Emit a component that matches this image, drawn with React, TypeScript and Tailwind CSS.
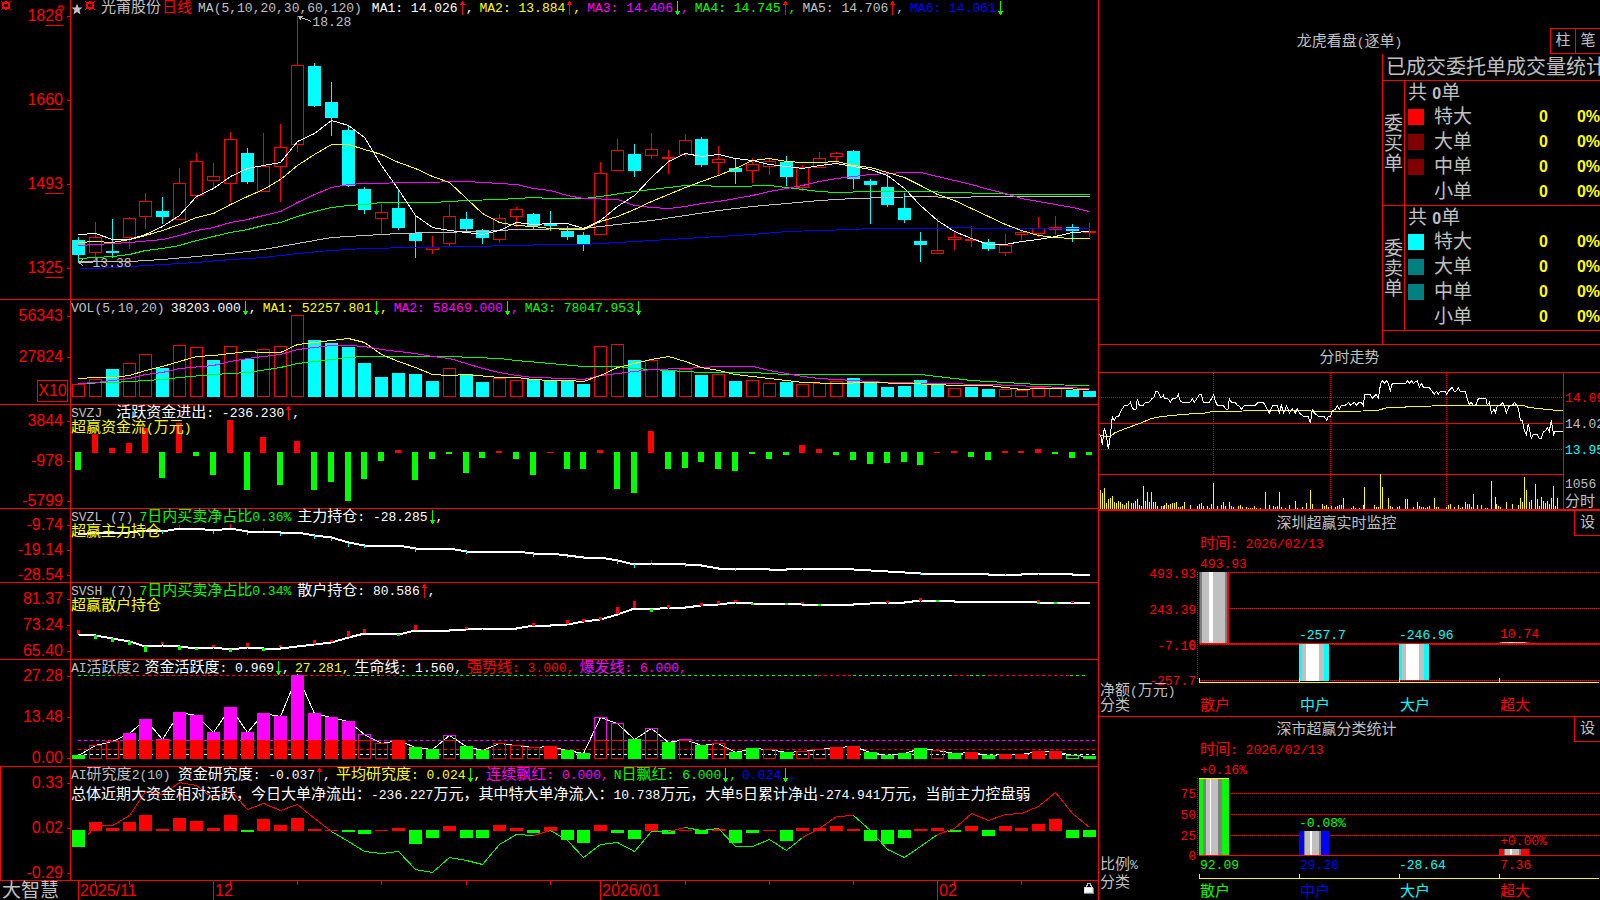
import type { ReactNode } from 'react';

type Pt = [number, number];

const CHART_LEFT = 71;
const CHART_WIDTH = 1027;

// Left edge of the centre pixel of bar i
const cx = (i: number) => Math.floor(78.6 + 16.845 * i);

// [high, body top, body bottom, low, rising]
const CANDLES: [number, number, number, number, number][] = [
  [237, 240, 255, 262, 0], [222, 237, 253, 259, 1], [219, 251, 253, 258, 0], [217, 218, 238, 249, 1],
  [193, 201, 217, 229, 1], [197, 211, 217, 224, 0], [168, 183, 220, 220, 1], [153, 161, 196, 199, 1],
  [163, 176, 181, 188, 1], [132, 139, 184, 202, 1], [148, 153, 182, 184, 0], [133, 166, 192, 192, 1],
  [124, 147, 167, 202, 1], [16, 65, 145, 152, 1], [63, 66, 106, 107, 0], [82, 102, 118, 136, 0],
  [126, 130, 186, 187, 0], [187, 189, 210, 214, 0], [204, 212, 219, 233, 1], [189, 208, 228, 230, 0],
  [215, 233, 241, 258, 0], [236, 247, 250, 254, 1], [204, 216, 244, 246, 1], [212, 219, 229, 231, 0],
  [229, 230, 238, 244, 0], [214, 218, 240, 243, 1], [207, 209, 217, 227, 1], [213, 214, 226, 229, 0],
  [211, 224, 226, 231, 0], [226, 231, 237, 240, 0], [232, 235, 244, 251, 0], [162, 173, 235, 235, 1],
  [139, 150, 171, 171, 1], [144, 154, 171, 177, 0], [133, 149, 156, 159, 1], [150, 157, 158, 174, 1],
  [134, 140, 155, 157, 1], [137, 139, 165, 167, 0], [146, 159, 163, 176, 1], [159, 168, 172, 184, 0],
  [158, 164, 171, 183, 1], [159, 161, 167, 175, 1], [156, 162, 177, 186, 0], [165, 167, 188, 191, 1],
  [152, 158, 168, 168, 1], [152, 153, 157, 163, 1], [150, 151, 179, 189, 0], [179, 181, 185, 224, 0],
  [174, 187, 205, 207, 0], [193, 208, 220, 223, 0], [232, 241, 245, 262, 0], [218, 250, 254, 254, 1],
  [232, 237, 240, 250, 1], [226, 239, 241, 247, 1], [239, 242, 249, 251, 0], [234, 245, 253, 256, 1],
  [230, 232, 235, 240, 1], [217, 228, 234, 237, 1], [216, 227, 230, 235, 1], [224, 227, 231, 242, 0],
  [223, 231, 233, 237, 1],
];

const MA5: Pt[] = [[0, 234], [1, 233], [2, 239], [3, 239], [4, 234], [5, 226], [6, 215], [7, 196], [8, 188], [9, 176], [10, 168], [11, 165], [12, 162], [13, 141], [14, 133], [15, 120], [16, 125], [17, 137], [18, 165], [19, 189], [20, 215], [21, 227], [22, 230], [23, 232], [24, 234], [25, 230], [26, 222], [27, 224], [28, 223], [29, 223], [30, 228], [31, 220], [32, 206], [33, 195], [34, 177], [35, 161], [36, 153], [37, 156], [38, 154], [39, 158], [40, 160], [41, 164], [42, 166], [43, 168], [44, 165], [45, 163], [46, 166], [47, 169], [48, 175], [49, 188], [50, 205], [51, 220], [52, 231], [53, 238], [54, 244], [55, 244], [56, 241], [57, 239], [58, 236], [59, 232], [60, 231]];
const MA10: Pt[] = [[0, 242], [1, 241], [2, 242], [3, 239], [4, 235], [5, 230], [6, 224], [7, 217], [8, 213], [9, 204], [10, 196], [11, 189], [12, 179], [13, 165], [14, 154], [15, 144], [16, 144], [17, 149], [18, 154], [19, 162], [20, 168], [21, 176], [22, 182], [23, 198], [24, 213], [25, 222], [26, 225], [27, 226], [28, 228], [29, 229], [30, 229], [31, 221], [32, 216], [33, 209], [34, 201], [35, 194], [36, 187], [37, 181], [38, 175], [39, 168], [40, 160], [41, 158], [42, 161], [43, 162], [44, 162], [45, 161], [46, 165], [47, 167], [48, 172], [49, 177], [50, 185], [51, 194], [52, 200], [53, 208], [54, 216], [55, 224], [56, 230], [57, 235], [58, 237], [59, 238], [60, 238]];
const MA20: Pt[] = [[0, 245], [1, 244], [3, 242], [5, 239], [6, 235], [7, 230], [8, 227], [9, 222], [10, 219], [11, 215], [12, 211], [13, 202], [14, 194], [15, 187], [16, 184], [17, 183], [20, 182], [23, 181], [26, 184], [27, 188], [28, 190], [29, 195], [30, 198], [32, 199], [33, 205], [34, 207], [35, 208], [36, 206], [37, 203], [38, 201], [39, 198], [40, 195], [41, 191], [42, 188], [43, 185], [44, 181], [45, 178], [46, 176], [47, 174], [48, 173], [49, 172], [50, 172], [51, 176], [52, 180], [53, 184], [54, 189], [55, 193], [56, 198], [57, 201], [58, 204], [59, 207], [60, 211]];
const MA30: Pt[] = [[0, 258], [2, 256], [3, 254], [4, 250], [5, 248], [6, 245], [7, 240], [8, 236], [9, 232], [10, 229], [11, 225], [12, 222], [13, 216], [14, 211], [15, 207], [16, 205], [17, 204], [18, 202], [21, 202], [23, 200], [25, 199], [27, 197], [28, 198], [30, 198], [31, 196], [33, 191], [34, 189], [36, 185], [39, 186], [41, 185], [42, 187], [43, 189], [44, 191], [45, 192], [47, 191], [50, 191], [52, 192], [54, 193], [56, 194], [60, 194]];
const MA60: Pt[] = [[0, 261], [3, 261], [5, 259], [7, 256], [9, 253], [11, 249], [13, 243], [15, 237], [17, 235], [19, 233], [21, 232], [24, 231], [26, 229], [30, 228], [32, 224], [34, 220], [36, 215], [38, 210], [40, 206], [42, 203], [44, 200], [46, 198], [48, 197], [50, 196], [52, 197], [54, 196], [60, 196]];
const MA120: Pt[] = [[0, 268], [1, 268], [3, 266], [5, 264], [7, 262], [9, 259], [11, 257], [13, 253], [15, 250], [17, 248], [20, 247], [23, 246], [26, 245], [28, 244], [30, 244], [32, 242], [34, 240], [36, 238], [38, 236], [40, 234], [42, 231], [44, 230], [46, 229], [47, 228], [51, 228], [52, 227], [54, 228], [60, 228]];

const VOLUMES = [
  384, 379, 369, 363, 354, 368, 345, 347, 360, 346, 359, 349, 346, 315, 340, 343, 347, 363, 377, 373, 374, 381, 368, 374, 382, 378, 380, 379, 381, 381,
  384, 346, 344, 360, 360, 370, 369, 375, 374, 381, 380, 383, 382, 384, 383, 381, 378, 382, 387, 386, 380, 384, 388, 387, 389, 389, 390, 387, 388, 390, 391,
];
const VOLUME_UP = new Set([0, 1, 3, 4, 6, 7, 9, 11, 12, 13, 22, 25, 26, 31, 32, 34, 36, 38, 40, 41, 43, 44, 45, 52, 55, 56, 57, 58]);
const VOL5: Pt[] = [[0, 378], [1, 377], [2, 377], [3, 375], [4, 370], [5, 366], [6, 361], [7, 356], [8, 355], [9, 353], [10, 351], [11, 352], [12, 352], [13, 344], [14, 342], [15, 340], [16, 338], [17, 342], [18, 354], [19, 361], [20, 367], [21, 374], [22, 375], [23, 374], [25, 377], [26, 377], [27, 379], [28, 380], [29, 380], [30, 381], [31, 375], [32, 367], [33, 363], [34, 359], [35, 356], [36, 361], [37, 367], [38, 370], [39, 374], [40, 376], [41, 378], [42, 380], [43, 382], [45, 383], [47, 382], [49, 383], [51, 384], [52, 385], [54, 385], [55, 387], [56, 389], [57, 388], [58, 388], [60, 389]];
const VOL10: Pt[] = [[0, 383], [1, 382], [2, 380], [3, 378], [4, 374], [5, 372], [6, 368], [8, 365], [9, 361], [10, 358], [11, 356], [12, 354], [13, 349], [14, 347], [15, 345], [16, 345], [17, 346], [18, 349], [20, 353], [21, 356], [22, 358], [23, 363], [24, 368], [25, 372], [26, 375], [27, 377], [29, 378], [30, 379], [31, 375], [33, 371], [34, 369], [36, 368], [37, 367], [38, 366], [40, 366], [41, 370], [42, 373], [43, 376], [44, 378], [46, 380], [48, 382], [51, 383], [54, 384], [57, 386], [60, 388]];
const VOL20: Pt[] = [[0, 383], [2, 382], [3, 381], [5, 379], [6, 377], [8, 374], [10, 372], [12, 367], [13, 363], [14, 361], [16, 357], [17, 356], [22, 356], [25, 358], [26, 360], [28, 363], [30, 366], [32, 366], [33, 368], [34, 369], [36, 371], [37, 372], [40, 372], [42, 374], [50, 374], [52, 378], [53, 380], [55, 382], [57, 384], [60, 385]];

const FUND_FLOW = [
  -18, 19, 5, 10, 25, -26, 30, -4, -23, 33, -38, 16, -33, 12, -38, -30, -49, -27, -9, 3, -28, -7, -2, -21, -6, 2, -7, -23, 1, -17,
  -17, 3, -37, -41, 22, -17, -16, -10, -17, -19, -2, -7, -3, 8, 4, -3, -8, -12, -11, -10, -13, 1, 2, -5, -8, 2, 2, 4, -2, -6, -3,
];

const MAIN_HOLD: Pt[] = [[0, 534], [1, 532], [3, 532], [4, 530], [5, 531], [6, 528], [7, 528], [8, 530], [9, 528], [10, 531], [11, 531], [12, 532], [13, 532], [14, 535], [15, 537], [16, 542], [17, 545], [19, 545], [20, 548], [22, 548], [23, 551], [26, 551], [27, 553], [28, 553], [29, 555], [30, 557], [31, 557], [32, 560], [33, 564], [34, 563], [35, 563], [36, 564], [37, 565], [38, 568], [40, 568], [41, 569], [42, 569], [43, 568], [45, 568], [46, 569], [47, 570], [48, 571], [49, 572], [50, 573], [53, 573], [54, 574], [56, 574], [57, 573], [58, 573], [59, 574], [60, 574]];
// [bar, y, height, colour]
const MAIN_MARKS: [number, number, number, string][] = [
  [4, 526, 4, '#f00'], [6, 525, 3, '#f00'], [9, 524, 4, '#f00'], [11, 528, 3, '#f00'], [34, 560, 3, '#f00'], [55, 573, 2, '#f00'],
  [5, 531, 3, '#0ff'], [8, 531, 3, '#0ff'], [10, 532, 3, '#0ff'], [12, 533, 3, '#0ff'], [14, 535, 4, '#0ff'], [15, 537, 4, '#0ff'],
  [16, 543, 4, '#0ff'], [17, 545, 3, '#0ff'], [20, 548, 4, '#0ff'], [23, 551, 3, '#0ff'], [27, 553, 4, '#0ff'], [29, 556, 2, '#0ff'],
  [30, 557, 2, '#0ff'], [32, 560, 4, '#0ff'], [33, 564, 4, '#0ff'], [36, 564, 3, '#0ff'], [39, 568, 3, '#0ff'], [50, 573, 2, '#0ff'],
];

const RETAIL_HOLD: Pt[] = [[0, 634], [1, 635], [2, 638], [3, 641], [4, 646], [5, 645], [6, 646], [7, 648], [8, 647], [9, 649], [10, 647], [11, 648], [12, 648], [13, 646], [14, 644], [15, 642], [16, 637], [17, 633], [18, 633], [19, 634], [20, 630], [22, 630], [23, 629], [24, 628], [26, 628], [27, 625], [28, 625], [29, 624], [30, 621], [31, 619], [32, 614], [33, 608], [34, 609], [35, 607], [36, 607], [37, 605], [38, 604], [39, 602], [40, 603], [42, 603], [43, 604], [46, 604], [47, 603], [48, 602], [49, 602], [50, 600], [51, 600], [52, 601], [56, 601], [57, 602], [60, 602]];
const RETAIL_MARKS: [number, number, number, string][] = [
  [0, 630, 4, '#f00'], [5, 642, 2, '#f00'], [8, 645, 2, '#f00'], [10, 643, 4, '#f00'], [12, 645, 2, '#f00'], [14, 640, 4, '#f00'],
  [15, 640, 2, '#f00'], [16, 631, 6, '#f00'], [17, 629, 4, '#f00'], [20, 625, 5, '#f00'], [23, 627, 2, '#f00'], [27, 623, 3, '#f00'],
  [29, 620, 4, '#f00'], [30, 619, 3, '#f00'], [31, 617, 3, '#f00'], [32, 607, 7, '#f00'], [33, 601, 7, '#f00'], [35, 605, 3, '#f00'],
  [37, 603, 3, '#f00'], [38, 601, 3, '#f00'], [39, 600, 2, '#f00'], [43, 602, 2, '#f00'], [48, 601, 2, '#f00'], [50, 598, 3, '#f00'],
  [57, 600, 2, '#f00'], [59, 601, 2, '#f00'], [1, 635, 4, '#0f0'], [2, 638, 4, '#0f0'], [3, 641, 4, '#0f0'], [4, 646, 6, '#0f0'],
  [6, 646, 4, '#0f0'], [7, 648, 2, '#0f0'], [9, 649, 3, '#0f0'], [11, 648, 3, '#0f0'], [19, 634, 2, '#0f0'], [34, 609, 3, '#0f0'],
  [40, 603, 2, '#0f0'], [42, 603, 2, '#0f0'], [44, 604, 2, '#0f0'], [51, 600, 2, '#0f0'], [57, 602, 2, '#0f0'], [58, 602, 2, '#0f0'],
];

// kinds: g green, G green outline, r red, h red outline, m magenta over red, o magenta outline
const ACTIVITY = [
  755, 745, 741, 733, 719, 739, 712, 715, 732, 707, 732, 713, 716, 675, 713, 717, 721, 734, 743, 740, 747, 749, 735, 746, 750, 743, 745, 747, 746, 750,
  753, 717, 723, 739, 728, 742, 739, 745, 743, 752, 748, 749, 752, 751, 749, 747, 746, 752, 755, 753, 748, 750, 753, 752, 755, 754, 754, 751, 751, 755, 756,
];
const ACTIVITY_KIND = 'ghhmmmmmmmmmmmmmmohrggogghhhrggoogogoghgghghhrrgggghgrgrrrrGg';

// Colour runs of the dashed ceiling line, in pixels
const CEILING: [number, number, string][] = [
  [78, 112, '#0f0'], [112, 347, '#f00'], [347, 381, '#0f0'], [381, 400, '#f00'], [400, 533, '#0f0'], [533, 550, '#f00'], [550, 818, '#0f0'],
  [818, 853, '#f00'], [853, 954, '#0f0'], [954, 970, '#f00'], [970, 988, '#0f0'], [988, 1070, '#f00'], [1070, 1088, '#0f0'],
];

const RESEARCH = [
  -17, 9, 3, 9, 16, 2, 13, 10, 3, 16, -2, 12, 6, 13, 2, 1, -2, -4, 1, 3, -14, -8, 5, -8, -8, 6, 3, -3, 4, -10,
  -13, 6, -3, -9, 7, -4, 1, -4, 2, -13, -3, 1, -11, 3, 3, 5, 2, -11, -14, -8, 2, 3, -2, 5, -6, 5, 3, 7, 12, -8, -7,
];
const RESEARCH_LINES: { color: string; pts: Pt[] }[] = [
  { color: '#f00', pts: [[0.5, 835], [1, 825], [2, 825], [3, 815], [4, 791], [5, 794], [6, 782], [7, 785], [8, 798], [9, 790], [10, 809], [11, 803], [12, 810], [13, 804], [14, 818], [15, 831]] },
  { color: '#0f0', pts: [[15, 831], [16, 841], [17, 851], [18, 853], [19, 851], [20, 869], [21, 872], [22, 857], [23, 860], [24, 864], [25, 844], [26, 834], [27, 835]] },
  { color: '#f00', pts: [[27, 835], [28, 830]] },
  { color: '#0f0', pts: [[28, 830], [29, 840], [30, 857], [31, 844], [32, 842], [33, 851], [34, 831], [35, 831]] },
  { color: '#f00', pts: [[35, 831], [36, 827]] },
  { color: '#0f0', pts: [[36, 827], [37, 830], [38, 828], [39, 846], [40, 846], [41, 839], [42, 850], [43, 837]] },
  { color: '#f00', pts: [[43, 837], [44, 828], [45, 816], [46, 815]] },
  { color: '#0f0', pts: [[46, 815], [47, 830], [48, 849], [49, 857], [50, 846], [51, 834]] },
  { color: '#f00', pts: [[51, 834], [52, 828], [53, 813], [54, 820], [55, 814], [56, 813], [57, 806], [58, 792], [59, 813], [60, 827]] },
];

// Intraday data is drawn at three units per pixel
const INTRADAY_PRICE = '27,284 32,286 37,315 43,263 49,286 55,328 60,293 67,230 73,240 79,230 86,229 91,218 96,208 103,197 115,195 121,187 127,203 133,209 138,207 142,176 148,197 160,196 166,187 178,186 186,176 192,172 198,154 204,156 213,175 220,166 223,175 235,177 241,186 247,177 259,174 265,164 271,184 277,187 300,187 307,176 313,187 328,164 334,164 340,187 358,187 365,175 371,164 377,186 383,197 400,197 409,208 414,207 418,176 424,186 436,187 442,197 448,198 454,209 460,200 466,196 496,196 505,187 520,187 526,197 532,208 538,219 548,197 562,196 568,219 574,196 581,219 590,197 598,219 607,207 616,219 622,207 628,219 640,228 655,230 661,250 667,208 673,219 685,229 703,230 710,241 715,230 721,230 727,212 737,207 742,197 748,207 754,196 766,196 776,187 782,196 793,187 799,196 808,187 814,187 820,196 824,163 841,163 847,175 858,163 865,174 872,130 878,122 884,130 889,122 895,130 901,153 907,130 948,130 952,122 958,130 964,122 970,130 982,122 988,141 994,130 1000,141 1018,143 1033,163 1039,154 1045,163 1051,154 1066,154 1070,163 1075,154 1086,142 1093,154 1098,154 1105,143 1111,154 1126,154 1131,175 1138,193 1143,187 1150,196 1157,196 1165,176 1188,176 1192,196 1198,187 1204,219 1212,208 1216,219 1222,197 1231,197 1237,188 1243,196 1249,219 1258,197 1267,196 1274,187 1285,205 1291,240 1297,242 1303,273 1309,284 1315,251 1324,295 1330,284 1342,284 1347,295 1354,295 1360,275 1366,273 1372,262 1378,274 1384,241 1391,284 1395,274 1419,274';
const INTRADAY_AVG = '27,284 40,288 62,289 75,278 100,268 150,250 185,235 220,229 280,223 345,219 370,214 460,213 470,211 655,211 665,214 820,213 835,211 865,211 890,203 945,202 950,199 1025,198 1035,196 1300,196 1315,202 1360,207 1385,209 1395,211 1419,211';
const INTRADAY_VOL: Pt[] = [[31, 450], [37, 459], [43, 444], [49, 489], [55, 477], [61, 474], [67, 468], [73, 486], [79, 489], [85, 483], [91, 486], [97, 492], [103, 495], [109, 489], [115, 483], [124, 489], [130, 489], [136, 483], [142, 477], [148, 495], [154, 498], [160, 438], [166, 483], [172, 456], [178, 486], [184, 456], [190, 486], [196, 486], [202, 498], [214, 498], [220, 498], [223, 495], [229, 489], [235, 495], [241, 492], [247, 489], [253, 489], [259, 486], [265, 501], [271, 501], [277, 498], [283, 486], [301, 495], [322, 498], [328, 492], [334, 489], [340, 498], [352, 498], [358, 504], [364, 492], [370, 430], [382, 498], [394, 495], [400, 486], [406, 498], [418, 486], [424, 498], [430, 501], [445, 498], [451, 495], [457, 501], [469, 501], [475, 504], [481, 504], [487, 504], [493, 498], [499, 504], [511, 504], [526, 456], [538, 495], [550, 498], [556, 501], [562, 498], [568, 456], [574, 501], [586, 504], [598, 495], [616, 483], [622, 504], [637, 501], [649, 489], [661, 450], [667, 492], [697, 492], [703, 498], [709, 495], [715, 501], [724, 498], [736, 501], [742, 498], [748, 495], [754, 495], [760, 474], [784, 504], [790, 498], [796, 504], [808, 504], [820, 495], [823, 441], [853, 495], [859, 501], [865, 501], [871, 403], [877, 441], [895, 474], [901, 498], [907, 501], [922, 501], [928, 498], [946, 477], [952, 477], [970, 501], [982, 486], [988, 498], [994, 501], [1000, 501], [1006, 504], [1012, 501], [1018, 498], [1033, 474], [1039, 501], [1045, 501], [1069, 501], [1075, 495], [1081, 492], [1093, 501], [1105, 495], [1111, 504], [1117, 501], [1126, 486], [1132, 492], [1138, 492], [1144, 501], [1150, 462], [1162, 495], [1174, 495], [1186, 504], [1192, 504], [1204, 423], [1216, 471], [1219, 492], [1225, 498], [1231, 501], [1249, 486], [1267, 492], [1285, 495], [1291, 474], [1297, 486], [1303, 411], [1309, 450], [1318, 486], [1324, 480], [1336, 432], [1342, 477], [1348, 498], [1354, 471], [1360, 483], [1366, 489], [1372, 483], [1378, 492], [1384, 474], [1390, 438], [1396, 498], [1402, 474]];

const MONO = 'font-["Liberation_Mono","Noto_Sans_CJK_SC",monospace]';
const SANS = 'font-["Liberation_Sans","Noto_Sans_CJK_SC",sans-serif]';

// Chinese runs are set a little larger than the Latin ones
function Mixed({ text }: { text: string }) {
  return (
    <>
      {text.split(/([\u3000-\u9fff\uff00-\uffef]+)/).map((part, i) =>
        i % 2 ? <span key={i} className="text-[15px]">{part}</span> : part
      )}
    </>
  );
}

function Arrow({ dir }: { dir: 'up' | 'down' }) {
  const up = dir === 'up';
  return (
    <svg width="8" height="15" viewBox="0 0 8 15" className="shrink-0" shapeRendering="crispEdges" fill={up ? '#f00' : '#0f0'}>
      <rect x="4" y="0" width="1" height="14" />
      {up ? <path d="M3 1h3v2h1v1H2V3h1z" /> : <path d="M3 13h3v-2h1v-1H2v1h1z" />}
    </svg>
  );
}

function Item({ color, text, dir, comma = true }: { color: string; text: string; dir?: 'up' | 'down'; comma?: boolean }) {
  return (
    <span className={`flex ${color}`}>
      <span><Mixed text={text} /></span>
      {dir && <Arrow dir={dir} />}
      {comma && <span>,</span>}
    </span>
  );
}

function Gear() {
  return (
    <svg width="10" height="10" viewBox="0 0 10 10" shapeRendering="crispEdges" fill="#f00">
      <path fillRule="evenodd" d="M1 1h8v7H1zM3 3v3h4V3z" />
      <path d="M0 0h1v1H0zM9 0h1v1H9zM0 8h1v1H0zM9 8h1v1H9zM4 0h2v1H4zM4 8h2v1H4z" />
    </svg>
  );
}

function Line({ pts, color, width = 1 }: { pts: Pt[]; color: string; width?: number }) {
  return (
    <polyline
      points={pts.map(([i, y]) => `${cx(i) + 0.5},${y + 0.5}`).join(' ')}
      fill="none"
      stroke={color}
      strokeWidth={width}
      vectorEffect="non-scaling-stroke"
    />
  );
}

function HollowBar({ i, top, bottom, color }: { i: number; top: number; bottom: number; color: string }) {
  return <rect x={cx(i) - 5.5} y={top + 0.5} width={12} height={Math.max(bottom - top - 1, 0.5)} fill="none" stroke={color} />;
}

interface PanelProps {
  top: number;
  height: string;
  chartHeight: number;
  gap: string;
  labels: ReactNode[];
  axisExtra?: ReactNode;
  axisClass?: string;
  header: ReactNode;
  headerGap?: string;
  note?: string;
  noteClass?: string;
  chart: ReactNode;
  children?: ReactNode;
}

function Panel({ top, height, chartHeight, gap, labels, axisExtra, axisClass = '', header, headerGap = 'gap-1.5', note, noteClass = 'text-[#ff0]', chart, children }: PanelProps) {
  return (
    <section className={`flex border-b border-[#f00] ${height}`}>
      <div className={`relative flex w-[71px] shrink-0 flex-col border-r border-[#f00] pt-2 ${gap} ${SANS} text-base leading-4 text-[#f00] ${axisClass}`}>
        {labels.map((label, i) => (
          <div key={i} className="flex items-center justify-end gap-1">
            <span>{label}</span>
            <span className="h-px w-[3px] bg-[#f00]" />
          </div>
        ))}
        {axisExtra}
      </div>
      <div className="relative min-w-0 flex-1">
        <svg
          className="block h-full w-full"
          viewBox={`${CHART_LEFT} ${top} ${CHART_WIDTH} ${chartHeight}`}
          preserveAspectRatio="none"
          shapeRendering="crispEdges"
        >
          {chart}
        </svg>
        <div className="absolute left-0 top-0 pt-px leading-[15px] whitespace-pre">
          <div className={`flex ${headerGap}`}>{header}</div>
          {note && <div className={noteClass}><Mixed text={note} /></div>}
        </div>
        {children}
      </div>
    </section>
  );
}

function PriceLabel({ value }: { value: string }) {
  return (
    <>
      {value.slice(0, 2)}
      <span className="underline decoration-1 underline-offset-[4px]">{value.slice(2)}</span>
    </>
  );
}

function Candles() {
  return (
    <>
      {CANDLES.map(([high, top, bottom, low, up], i) =>
        up ? (
          <g key={i}>
            <rect x={cx(i)} y={high} width={1} height={top - high} fill="#f00" />
            <rect x={cx(i)} y={bottom} width={1} height={low - bottom} fill="#f00" />
            <HollowBar i={i} top={top} bottom={bottom} color="#f00" />
          </g>
        ) : (
          <g key={i} fill="#0ff">
            <rect x={cx(i)} y={high} width={1} height={low - high} />
            <rect x={cx(i) - 6} y={top} width={13} height={bottom - top} />
          </g>
        )
      )}
    </>
  );
}

function ActivityBars() {
  const base = 759;
  const split = 740;
  return (
    <>
      {ACTIVITY.map((y, i) => {
        const kind = ACTIVITY_KIND[i];
        const x = cx(i) - 6;
        if (kind === 'g' || kind === 'r') {
          return <rect key={i} x={x} y={y} width={13} height={base - y} fill={kind === 'g' ? '#0f0' : '#f00'} />;
        }
        if (kind === 'h' || kind === 'G') {
          return <HollowBar key={i} i={i} top={y} bottom={base} color={kind === 'h' ? '#f00' : '#0f0'} />;
        }
        if (kind === 'm') {
          return (
            <g key={i}>
              <rect x={x} y={y} width={13} height={split - y} fill="#f0f" />
              <rect x={x} y={split} width={13} height={base - split} fill="#f00" />
            </g>
          );
        }
        return (
          <g key={i}>
            <HollowBar i={i} top={y} bottom={split + 1} color="#f0f" />
            <HollowBar i={i} top={split} bottom={base} color="#f00" />
          </g>
        );
      })}
    </>
  );
}

function LeftCharts() {
  return (
    <div className="min-w-0 flex-1">
      <Panel
        top={0}
        height="h-[300px]"
        chartHeight={299}
        gap="gap-[68px]"
        labels={['1828', '1660', '1493', '1325'].map(v => <PriceLabel key={v} value={v} />)}
        axisExtra={
          <>
            <button aria-label="设置" className="absolute left-px top-px"><Gear /></button>
            <button aria-label="帮助" className="absolute right-[5px] top-0 text-sm font-bold text-[#c00000]">?</button>
          </>
        }
        header={
          <>
            <span className="flex items-center gap-0.5 text-[#c0c0c0]">
              <svg width="12" height="12" viewBox="0 0 24 24" fill="#c0c0c0">
                <path d="M12 1l3 8h8l-6 5 2 9-7-5-7 5 2-9-6-5h8z" />
              </svg>
              <button aria-label="指标设置" className="self-start"><Gear /></button>
            </span>
            <span className="flex gap-px text-[15px]">
              <span className="text-[#c0c0c0]">光莆股份</span>
              <span className="text-[#f00]">日线</span>
            </span>
            <span className="mr-1 text-[#c0c0c0]">MA(5,10,20,30,60,120)</span>
            <Item color="text-white" text="MA1: 14.026" dir="up" />
            <Item color="text-[#ff0]" text="MA2: 13.884" dir="up" />
            <Item color="text-[#f0f]" text="MA3: 14.406" dir="down" />
            <Item color="text-[#0f0]" text="MA4: 14.745" dir="up" />
            <Item color="text-[#c0c0c0]" text="MA5: 14.706" dir="up" />
            <Item color="text-[#00f]" text="MA6: 14.061" dir="down" comma={false} />
          </>
        }
        chart={
          <>
            <Candles />
            <Line pts={MA120} color="#00f" />
            <Line pts={MA60} color="#c0c0c0" />
            <Line pts={MA30} color="#0f0" />
            <Line pts={MA20} color="#f0f" />
            <Line pts={MA10} color="#ff0" />
            <Line pts={MA5} color="#fff" />
            <path d="M311.5 21.5L298.5 16.5l3 4M298.5 16.5h4M92.5 262.5H79l4-3M79 262.5l4 3" fill="none" stroke="#c0c0c0" />
          </>
        }
      >
        <span className="absolute left-[23.5%] top-[15px] leading-[15px] text-[#c0c0c0]">18.28</span>
        <span className="absolute left-[2.1%] top-[256px] leading-[15px] text-[#c0c0c0]">13.38</span>
      </Panel>

      <Panel
        top={300}
        height="h-[105px]"
        chartHeight={104}
        gap="gap-[25px]"
        labels={['56343', '27824']}
        axisExtra={<div className="-mt-2.5 mr-0.5 h-[22px] w-[31px] self-end border border-[#f00] text-center leading-5">X10</div>}
        header={
          <>
            <span className="text-[#c0c0c0]">VOL(5,10,20)</span>
            <Item color="text-white" text="38203.000" dir="down" />
            <Item color="text-[#ff0]" text="MA1: 52257.801" dir="down" />
            <Item color="text-[#f0f]" text="MA2: 58469.000" dir="down" />
            <Item color="text-[#0f0]" text="MA3: 78047.953" dir="down" comma={false} />
          </>
        }
        chart={
          <>
            {VOLUMES.map((y, i) =>
              VOLUME_UP.has(i)
                ? <HollowBar key={i} i={i} top={y} bottom={397} color="#f00" />
                : <rect key={i} x={cx(i) - 6} y={y} width={13} height={397 - y} fill="#0ff" />
            )}
            <Line pts={VOL20} color="#0f0" />
            <Line pts={VOL10} color="#f0f" />
            <Line pts={VOL5} color="#ff0" />
          </>
        }
      />

      <Panel
        top={405}
        height="h-[104px]"
        chartHeight={103}
        gap="gap-6"
        labels={['3844', '-978', '-5799']}
        header={
          <>
            <span className="mr-2 text-[#c0c0c0]">SVZJ</span>
            <Item color="text-white" text="活跃资金进出: -236.230" dir="up" />
          </>
        }
        note="超赢资金流(万元)"
        chart={FUND_FLOW.map((v, i) => (
          <rect key={i} x={cx(i) - 3} y={v > 0 ? 453 - v : 452} width={6} height={Math.abs(v)} fill={v > 0 ? '#f00' : '#0f0'} />
        ))}
      />

      <Panel
        top={509}
        height="h-[74px]"
        chartHeight={73}
        gap="gap-[9px]"
        labels={['-9.74', '-19.14', '-28.54']}
        header={
          <>
            <span className="text-[#c0c0c0]">SVZL (7)</span>
            <Item color="text-[#0f0]" text="7日内买卖净占比0.36%" comma={false} />
            <Item color="text-white" text="主力持仓: -28.285" dir="down" />
          </>
        }
        note="超赢主力持仓"
        chart={
          <>
            <Line pts={MAIN_HOLD} color="#fff" width={2} />
            {MAIN_MARKS.map(([i, y, h, c], n) => <rect key={n} x={cx(i)} y={y} width={1} height={h} fill={c} />)}
          </>
        }
      />

      <Panel
        top={583}
        height="h-[77px]"
        chartHeight={76}
        gap="gap-[10px]"
        labels={['81.37', '73.24', '65.40']}
        header={
          <>
            <span className="text-[#c0c0c0]">SVSH (7)</span>
            <Item color="text-[#0f0]" text="7日内买卖净占比0.34%" comma={false} />
            <Item color="text-white" text="散户持仓: 80.586" dir="up" />
          </>
        }
        note="超赢散户持仓"
        chart={
          <>
            <Line pts={RETAIL_HOLD} color="#fff" width={2} />
            {RETAIL_MARKS.map(([i, y, h, c], n) => <rect key={n} x={cx(i) - 1} y={y} width={3} height={h} fill={c} />)}
          </>
        }
      />

      <Panel
        top={660}
        height="h-[107px]"
        chartHeight={106}
        gap="gap-[25px]"
        labels={['27.28', '13.48', '0.00']}
        headerGap="gap-[5px]"
        header={
          <>
            <span className="text-[#c0c0c0]"><Mixed text="AI活跃度2" /></span>
            <Item color="text-white" text="资金活跃度: 0.969" dir="down" />
            <Item color="text-[#ff0]" text="27.281" />
            <Item color="text-white" text="生命线: 1.560" />
            <Item color="text-[#f00]" text="强势线: 3.000" />
            <Item color="text-[#f0f]" text="爆发线: 6.000" />
          </>
        }
        chart={
          <>
            <path d="M78 740.5H1098" stroke="#f0f" strokeDasharray="3 3" />
            <path d="M78 749.5H1098" stroke="#f00" strokeDasharray="3 3" />
            <path d="M78 754.5H1098" stroke="#fff" strokeDasharray="3 3" />
            {CEILING.map(([x1, x2, c]) => (
              <path key={x1} d={`M${x1} 675.5H${x2}`} stroke={c} strokeDasharray="3 3" />
            ))}
            <Line pts={ACTIVITY.map((y, i): Pt => [i, y])} color="#fff" />
            <ActivityBars />
          </>
        }
      />

      <Panel
        top={767}
        height="h-[114px]"
        chartHeight={113}
        gap="gap-[29px]"
        labels={['0.33', '0.02', '-0.29']}
        axisClass="border-l"
        headerGap="gap-[5px]"
        header={
          <>
            <span className="mr-0.5 text-[#c0c0c0]"><Mixed text="AI研究度2(10)" /></span>
            <Item color="text-white" text="资金研究度: -0.037" dir="up" />
            <Item color="text-[#ff0]" text="平均研究度: 0.024" dir="down" />
            <Item color="text-[#f0f]" text="连续飘红: 0.000" />
            <Item color="text-[#0f0]" text="N日飘红: 6.000" dir="down" />
            <Item color="text-[#00f]" text="0.024" dir="down" />
          </>
        }
        note="总体近期大资金相对活跃，今日大单净流出：-236.227万元，其中特大单净流入：10.738万元，大单5日累计净出-274.941万元，当前主力控盘弱"
        noteClass="mt-[5px] text-white"
        chart={
          <>
            {RESEARCH.map((v, i) => (
              <rect key={i} x={cx(i) - 6} y={v > 0 ? 831 - v : 830} width={13} height={Math.abs(v)} fill={v > 0 ? '#f00' : '#0f0'} />
            ))}
            {RESEARCH_LINES.map((l, i) => <Line key={i} pts={l.pts} color={l.color} />)}
          </>
        }
      />

      <footer className={`flex h-[19px] ${SANS} text-base leading-[19px] text-[#f00]`}>
        <div className="w-[71px] shrink-0 whitespace-nowrap pl-0.5 text-[19px] text-[#c0c0c0]">大智慧</div>
        <div className="relative grid min-w-0 flex-1 grid-cols-[7fr_135fr_387fr_337fr_161fr]">
          <span />
          <span className="border-l border-[#f00] pl-px">2025/11</span>
          <span className="border-l border-[#f00] pl-px">12</span>
          <span className="border-l border-[#f00] pl-px">2026/01</span>
          <span className="border-l border-[#f00] pl-px">02</span>
          <svg className="absolute inset-0 h-full w-full" viewBox="71 0 1027 19" preserveAspectRatio="none" shapeRendering="crispEdges">
            {[1, 3, 9, 13, 18, 23, 28, 32, 36, 41, 46, 52, 56].map(i => (
              <rect key={i} x={cx(i)} y={0} width={1} height={4} fill="#f00" />
            ))}
          </svg>
          <svg className="absolute right-1 top-0.5" width="10" height="12" viewBox="0 0 10 12" shapeRendering="crispEdges">
            <path d="M2.5 4V2h1V.5h3V2h1v2" fill="none" stroke="#c0c0c0" />
            <rect x="9" y="5" width="1" height="6" fill="#808080" />
            <rect x="0" y="10" width="10" height="1" fill="#808080" />
            <rect x="1" y="5" width="7" height="4" fill="#fff" />
            <path d="M.5 4.500h8v5h-8z" fill="none" stroke="#e0e0e0" />
          </svg>
        </div>
      </footer>
    </div>
  );
}

interface OrderRow {
  name: string;
  swatch: string;
}

function OrderGroup({ side, rows }: { side: string; rows: OrderRow[] }) {
  return (
    <div className="flex h-[125px] border-b border-[#f00]">
      <div className="flex w-[22px] shrink-0 flex-col items-center justify-center border-r border-[#f00] pt-0.5 text-[19px] leading-5">
        {side.split('').map((ch, i) => <span key={i}>{ch}</span>)}
      </div>
      <table className="w-full table-fixed border-collapse leading-6">
        <caption className="h-[23px] pl-[3px] text-left">
          共 <b className="text-base">0</b>单
        </caption>
        <colgroup>
          <col className="w-[29px]" />
          <col />
          <col className="w-[52px]" />
        </colgroup>
        <tbody>
          {rows.map(r => (
            <tr key={r.name} className="h-[25px]">
              <td className="pl-[3px]"><span className={`block size-4 ${r.swatch}`} /></td>
              <td>
                <span className="flex justify-between">
                  <span>{r.name}</span>
                  <span className="text-base leading-6 font-bold text-[#ff0]">0</span>
                </span>
              </td>
              <td className="text-right text-base leading-6 font-bold text-[#ff0]">0%</td>
            </tr>
          ))}
        </tbody>
      </table>
    </div>
  );
}

function OrderStats() {
  return (
    <section className="flex h-[345px] flex-col border-b border-[#f00] text-[#c0c0c0]">
      <div className="flex h-[54px] items-end">
        <h2 className="flex-1 pb-0.5 pl-[50px] text-center leading-[18px]"><Mixed text="龙虎看盘(逐单)" /></h2>
        <button className="size-[26px] border border-[#f00] pt-0.5 text-[15px] leading-5">柱</button>
        <button className="h-[26px] w-6 border-y border-[#f00] pt-0.5 text-[15px] leading-5">笔</button>
      </div>
      <div className={`ml-auto w-[218px] flex-1 overflow-hidden border-l border-[#f00] ${SANS} text-[19px]`}>
        <h3 className="h-[27px] border-b border-[#f00] pl-[3px] text-xl leading-[26px] whitespace-nowrap">已成交委托单成交量统计</h3>
        <OrderGroup
          side="委买单"
          rows={[
            { name: '特大', swatch: 'bg-[#f00]' },
            { name: '大单', swatch: 'bg-[#800000]' },
            { name: '中单', swatch: 'bg-[#800000]' },
            { name: '小单', swatch: 'bg-black' },
          ]}
        />
        <OrderGroup
          side="委卖单"
          rows={[
            { name: '特大', swatch: 'bg-[#0ff]' },
            { name: '大单', swatch: 'bg-[#008080]' },
            { name: '中单', swatch: 'bg-[#008080]' },
            { name: '小单', swatch: 'bg-black' },
          ]}
        />
      </div>
    </section>
  );
}

function Intraday() {
  return (
    <section>
      <h2 className="h-[27px] text-center text-[15px] leading-7 text-[#c0c0c0]">分时走势</h2>
      <div className="flex h-[137px] border-t border-[#f00]">
        <svg className="h-full min-w-0 flex-1" viewBox="27 99 1392 408" preserveAspectRatio="none" shapeRendering="crispEdges">
          <g stroke="#f00" strokeWidth="3" fill="none">
            <path d="M370.5 99V403M721.5 99V507M1069.5 99V507M27 172.5H1419M27 328.5H1419" strokeDasharray="3 3" />
            <path d="M27 250.5H1419M27 403.5H1419" />
          </g>
          <g fill="#ff0">
            {INTRADAY_VOL.map(([x, y]) => <rect key={x} x={x - 1.5} y={y} width={3} height={507 - y} />)}
          </g>
          <polyline points={INTRADAY_AVG} fill="none" stroke="#ff0" strokeWidth="3" />
          <polyline points={INTRADAY_PRICE} fill="none" stroke="#fff" strokeWidth="3" />
        </svg>
        <div className="flex w-[37px] shrink-0 flex-col overflow-hidden border-l border-[#f00] pl-px pt-[18px] leading-4 text-[#c0c0c0]">
          <span className="mb-[10px] text-[#f00]">14.09</span>
          <span className="mb-[10px]">14.02</span>
          <span className="mb-[18px] text-[#0ff]">13.95</span>
          <span>1056</span>
          <span className="text-[15px] leading-5">分时</span>
        </div>
      </div>
    </section>
  );
}

interface Stripe {
  x: number;
  w: number;
  color: string;
}

const stripes = (edge: string, stops: [number, string][]): Stripe[] => {
  const out: Stripe[] = [{ x: 0, w: 30, color: edge }];
  stops.slice(0, -1).forEach(([x, color], i) => out.push({ x, w: stops[i + 1][0] - x, color }));
  return out;
};

const RED_PIPE = stripes('#f00', [[1, '#808080'], [3, '#c0c0c0'], [10, '#fff'], [14, '#c0c0c0'], [26, '#808080'], [28, '']]);
const CYAN_PIPE = stripes('#0ff', [[3, '#c0c0c0'], [7, '#fff'], [20, '#c0c0c0'], [25, '']]);
const GREEN_PIPE = stripes('#0f0', [[4, '#808080'], [7, '#c0c0c0'], [11, '#fff'], [12, '#c0c0c0'], [19, '#808080'], [23, '']]);
const BLUE_PIPE = stripes('#00f', [[5, '#808080'], [6, '#c0c0c0'], [11, '#fff'], [13, '#c0c0c0'], [20, '#808080'], [22, '']]);
const SMALL_PIPE = stripes('#f00', [[5, '#808080'], [6, '#c0c0c0'], [11, '#fff'], [13, '#c0c0c0'], [20, '#808080'], [22, '']]);

function Pipe({ x, top, bottom, pipe }: { x: number; top: number; bottom: number; pipe: Stripe[] }) {
  return (
    <>
      {pipe.map((s, i) => <rect key={i} x={x + s.x} y={top} width={s.w} height={bottom - top} fill={s.color} />)}
    </>
  );
}

function SummaryHead({ title }: { title: string }) {
  return (
    <>
      <div className="flex h-[25px]">
        <h2 className="flex-1 text-center text-[15px] leading-7 text-[#c0c0c0]">{title}</h2>
        <button className="w-[26px] border-b border-l border-[#f00] pt-0.5 text-[15px] leading-5 text-[#c0c0c0]">设</button>
      </div>
      <p className="h-[19px] pl-[101px] pt-px leading-4 text-[#f00]"><Mixed text="时间: 2026/02/13" /></p>
    </>
  );
}

const TICKS = [100, 200, 300, 400];

function AxisTicks({ y }: { y: number }) {
  return (
    <g fill="#ff0">
      <rect x={100} y={y} width="400" height={1} />
      {TICKS.map(x => <rect key={x} x={x} y={y - 4} width={1} height={4} />)}
    </g>
  );
}

function NetAmount() {
  return (
    <section className="border-b border-t-2 border-[#f00]">
      <SummaryHead title="深圳超赢实时监控" />
      <svg className="block h-[161px] w-full text-[13px]" shapeRendering="crispEdges">
        <g stroke="#f00" strokeDasharray="1 1">
          {[17.5, 53.5, 89.5, 125.5].map(y => <line key={y} x1="101" y1={y} x2="100%" y2={y} />)}
          <line x1="98.5" y1="17" x2="98.5" y2="124" />
        </g>
        <line x1="100" y1="88.5" x2="100%" y2="88.5" stroke="#f00" />
        <Pipe x={100} top={17} bottom={88} pipe={RED_PIPE} />
        <Pipe x={200} top={89} bottom={126} pipe={CYAN_PIPE} />
        <Pipe x={300} top={89} bottom={125} pipe={CYAN_PIPE} />
        <Pipe x={400} top={87} bottom={88} pipe={RED_PIPE} />
        <AxisTicks y={127} />
        <g fill="#f00" textAnchor="end">
          <text x="97" y="23">493.93</text>
          <text x="97" y="59">243.39</text>
          <text x="97" y="95">-7.16</text>
          <text x="97" y="94">0</text>
          <text x="97" y="130">-257.7</text>
        </g>
        <text x="101" y="13" fill="#f00">493.93</text>
        <text x="200" y="84" fill="#0ff">-257.7</text>
        <text x="300" y="84" fill="#0ff">-246.96</text>
        <text x="401" y="83" fill="#f00">10.74</text>
        <g className="text-[15px]">
          <text x="1" y="140" fill="#c0c0c0">净额<tspan className="text-[13px]">(</tspan>万元<tspan className="text-[13px]">)</tspan></text>
          <text x="1" y="155" fill="#c0c0c0">分类</text>
          <text x="101" y="155" fill="#f00">散户</text>
          <text x="201" y="155" fill="#0ff">中户</text>
          <text x="301" y="155" fill="#0ff">大户</text>
          <text x="401" y="155" fill="#f00">超大</text>
        </g>
      </svg>
    </section>
  );
}

function Classified() {
  return (
    <section>
      <SummaryHead title="深市超赢分类统计" />
      <svg className="block h-[139px] w-full text-[13px]" shapeRendering="crispEdges">
        <g stroke="#f00" strokeDasharray="1 1">
          {[32.5, 53.5, 74.5].map(y => <line key={y} x1="131" y1={y} x2="100%" y2={y} />)}
          <line x1="98.5" y1="17" x2="98.5" y2="94" />
        </g>
        <Pipe x={100} top={17} bottom={94} pipe={GREEN_PIPE} />
        <path d="M100 17.5h30" stroke="#ff0" />
        <Pipe x={200} top={70} bottom={94} pipe={BLUE_PIPE} />
        <Pipe x={400} top={88} bottom={94} pipe={SMALL_PIPE} />
        <line x1="100" y1="94.5" x2="100%" y2="94.5" stroke="#f00" />
        <AxisTicks y={117} />
        <g fill="#f00" textAnchor="end">
          <text x="97" y="37">75</text>
          <text x="97" y="58">50</text>
          <text x="97" y="79">25</text>
          <text x="97" y="99">0</text>
        </g>
        <text x="101" y="13" fill="#f00">+0.16%</text>
        <text x="200" y="66" fill="#0f0">-0.08%</text>
        <text x="401" y="84" fill="#f00">+0.00%</text>
        <text x="101" y="108" fill="#0f0">92.09</text>
        <text x="201" y="108" fill="#00f">29.20</text>
        <text x="300" y="108" fill="#0ff">-28.64</text>
        <text x="401" y="108" fill="#f00">7.36</text>
        <g className="text-[15px]">
          <text x="1" y="108" fill="#c0c0c0">比例<tspan className="text-[13px]">%</tspan></text>
          <text x="1" y="126" fill="#c0c0c0">分类</text>
          <text x="101" y="135" fill="#0f0">散户</text>
          <text x="201" y="135" fill="#00f">中户</text>
          <text x="301" y="135" fill="#0ff">大户</text>
          <text x="401" y="135" fill="#f00">超大</text>
        </g>
      </svg>
    </section>
  );
}

export default function App() {
  return (
    <main className={`flex min-h-screen overflow-hidden bg-black ${MONO} text-[13px]`}>
      <LeftCharts />
      <aside className="w-[502px] shrink-0 border-l border-[#f00]">
        <OrderStats />
        <Intraday />
        <NetAmount />
        <Classified />
      </aside>
    </main>
  );
}
